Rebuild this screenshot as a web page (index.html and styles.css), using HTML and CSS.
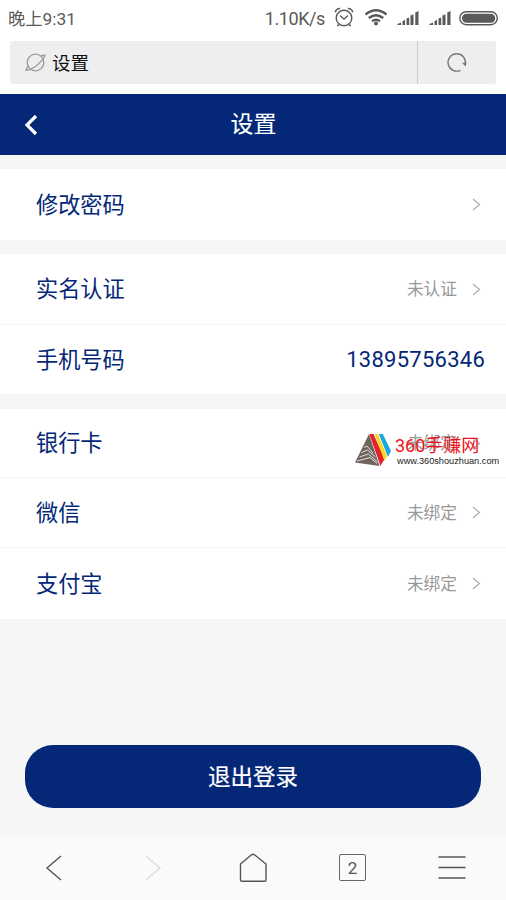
FILE: index.html
```html
<!DOCTYPE html>
<html lang="zh-CN">
<head>
<meta charset="utf-8">
<title>设置</title>
<link rel="stylesheet" href="styles.css">
</head>
<body>
<div class="status">
  <span class="time">晚上9:31</span>
  <span class="speed">1.10K/s</span>
  <svg class="status-icons" width="164" height="24" viewBox="334 6 164 24">
    <g fill="none" stroke="#5a5a5a" stroke-width="1.4" stroke-linecap="round">
      <circle cx="344" cy="18" r="7.8"/>
      <path d="M340.500 16l3.500 3 3.500-3M335.300 11.800a5 5 0 0 1 4.200-3.300M352.700 11.800a5 5 0 0 0-4.200-3.300M339 24.500l-1.300 1.300M349 24.500l1.300 1.300"/>
      <g stroke-width="2.400" stroke-linecap="butt"><path d="M365.500 14.500q10.500-8.500 21 0M368.800 18q7.200-5.600 14.400 0M372 21.200q4-2.800 8 0"/></g>
      <rect x="459.800" y="11.700" width="37.500" height="13" rx="6.500"/>
    </g>
    <g fill="#5a5a5a">
      <circle cx="376" cy="23.500" r="2"/>
      <path id="bars" d="M397.500 25v-1l3.500-1.500v2.500zM402.500 25v-4l2.500-1v5zM406.500 25v-6.500l2.700-1v7.500zM410.500 25v-9.500l3-1.300v10.800zM415.300 25v-12.500l3.200-1.500v14z"/>
      <use href="#bars" x="32"/>
      <rect x="462" y="13.700" width="33.200" height="9" rx="4.500"/>
    </g>
  </svg>
</div>
<div class="address">
  <div class="page-name">
    <svg width="22" height="20" viewBox="0 0 22 20" fill="none" stroke="#999" stroke-width="1.300"><circle cx="10.500" cy="9.500" r="8.300"/><path d="M3 13L1 17.200L5 16.700Q14 12.500 19.700 3.500L19.700 2L15.800 3"/></svg>
    <span>设置</span>
  </div>
  <div class="reload">
    <svg width="22" height="22" viewBox="0 0 22 22"><path d="M14.500 18.300A8.700 8.700 0 1 1 19.300 12" fill="none" stroke="#777" stroke-width="1.300"/><path d="M16 11l4.500-.5-.8 4z" fill="#777"/></svg>
  </div>
</div>
<header class="titlebar">
  <svg class="back" width="16" height="24" viewBox="0 0 16 24"><path d="M13 3L4 12l9 9" fill="none" stroke="#fff" stroke-width="3.200"/></svg>
  <h1>设置</h1>
</header>
<main>
  <section class="group password">
    <div class="row"><span>修改密码</span><svg class="chev" viewBox="0 0 9 13"><path d="M1 1l6.500 5.500L1 12"/></svg></div>
  </section>
  <section class="group identity">
    <div class="row"><span>实名认证</span><em>未认证</em><svg class="chev" viewBox="0 0 9 13"><path d="M1 1l6.500 5.500L1 12"/></svg></div>
    <div class="row"><span>手机号码</span><b class="phone">13895756346</b></div>
  </section>
  <section class="group accounts">
    <div class="row"><span>银行卡</span><em>未绑定</em><svg class="chev" viewBox="0 0 9 13"><path d="M1 1l6.500 5.500L1 12"/></svg>
      <div class="mark">
        <svg width="38" height="34" viewBox="354 433 38 34">
          <path d="M369 434L355 462.500l24.500 3.500z" fill="#70645f"/>
          <path d="M357 461l13-3.500 7 6M359.500 457l9-3 9 8M361.500 452.500l6-2.500 8 7M364 447.500l3-1.500 6 7" fill="none" stroke="#fff" stroke-width=".8"/>
          <path d="M369.300 434h4.200l11 25-4 7z" fill="#e3202b"/>
          <path d="M374.500 434h3.200l9.300 22-2.500 5z" fill="#fbd51e"/>
          <path d="M378.800 434h4l8.200 17-3 6z" fill="#18a8df"/>
        </svg>
        <div class="mark-text"><strong>360手赚网</strong><small>www.360shouzhuan.com</small></div>
      </div>
    </div>
    <div class="row"><span>微信</span><em>未绑定</em><svg class="chev" viewBox="0 0 9 13"><path d="M1 1l6.500 5.500L1 12"/></svg></div>
    <div class="row"><span>支付宝</span><em>未绑定</em><svg class="chev" viewBox="0 0 9 13"><path d="M1 1l6.500 5.500L1 12"/></svg></div>
  </section>
  <button class="logout">退出登录</button>
</main>
<nav class="toolbar">
  <svg viewBox="0 0 30 30"><path d="M22 3L8 15l14 12"/></svg>
  <svg class="off" viewBox="0 0 30 30"><path d="M8 3l14 12L8 27"/></svg>
  <svg viewBox="0 0 30 30"><path d="M2.500 11L13.500 1.800q1.500-1 3 0L28 11V27q0 1.300-1.300 1.300H3.800q-1.300 0-1.300-1.300z"/></svg>
  <span class="tabs"><i>2</i></span>
  <svg viewBox="0 0 30 30"><path d="M1.500 4h27M1.500 14.500h27M1.500 25h27"/></svg>
</nav>
</body>
</html>
```
FILE: styles.css
```css
* { box-sizing: border-box; }
body {
  margin: 0;
  width: 506px;
  height: 900px;
  display: flex;
  flex-direction: column;
  overflow: hidden;
  background: #fff;
  font-family: Roboto, "Noto Sans CJK SC", sans-serif;
}
svg { display: block; flex: none; }
.status {
  height: 41px;
  padding: 0 8px 5px;
  display: flex;
  align-items: center;
  color: #5a5a5a;
  font-size: 18px;
}
.time { font-size: 17.3px; padding-bottom: 2px; }
.speed { margin-left: auto; margin-right: 9px; letter-spacing: -.4px; }
.address {
  height: 43px;
  margin: 0 10px 10px;
  display: flex;
  background: #eeeef0;
  border-radius: 3px;
}
.page-name {
  flex: 1;
  display: flex;
  align-items: center;
  gap: 5px;
  padding-left: 15px;
  font-size: 18.5px;
  color: #111;
}
.page-name span { padding-bottom: 1px; }
.reload {
  width: 79px;
  border-left: 1px solid #ccc;
  display: flex;
  align-items: center;
  justify-content: center;
}
.titlebar {
  height: 61px;
  display: grid;
  grid-template-columns: 46px 1fr 46px;
  align-items: center;
  background: #042777;
  color: #fff;
}
.back { margin-left: 23px; }
h1 {
  margin: 0;
  padding-left: 1px;
  text-align: center;
  font-size: 23px;
  line-height: 34px;
  font-weight: 400;
  -webkit-text-stroke: .1px #fff;
}
main {
  flex: 1;
  display: flex;
  flex-direction: column;
  padding-top: 14px;
  background: #f6f6f6;
}
.group { background: #fff; }
.row {
  position: relative;
  height: 70px;
  padding: 0 25px 0 36px;
  display: flex;
  align-items: center;
  font-size: 22.2px;
  color: #042777;
}
.password { margin-bottom: 14px; }
.password .row { height: 71px; }
.identity { margin-bottom: 15px; }
.accounts .row:first-child { height: 68px; }
.accounts .row:last-child { height: 72px; }
.row + .row { border-top: 1px solid #f5f5f5; }
.row > span { flex: 1; padding-bottom: 4px; }
em { margin-right: 15px; padding-bottom: 2px; font-size: 16.7px; font-style: normal; color: #999; }
.chev { width: 9px; height: 13px; fill: none; stroke: #aaa; stroke-width: 1.1; }
.phone { margin-right: -4px; padding-bottom: 1px; font-weight: 400; font-size: 22px; letter-spacing: .25px; }
.mark {
  position: absolute;
  left: 354px;
  top: 24px;
  display: flex;
  align-items: flex-start;
}
.mark-text { display: flex; flex-direction: column; margin-left: 3px; white-space: nowrap; }
.mark-text strong { font-weight: 400; font-size: 18px; line-height: 26px; color: #f01018; }
.mark-text small { margin: -4px 0 0 2px; font: 9.2px/12px "Liberation Sans", sans-serif; color: #222; }
.logout {
  width: 456px;
  height: 63px;
  margin: 126px auto 0;
  padding: 0;
  border: 0;
  border-radius: 28px;
  background: #042777;
  color: #fff;
  font: 400 22.5px/65px Roboto, "Noto Sans CJK SC", sans-serif;
  -webkit-text-stroke: .2px #fff;
}
.toolbar {
  height: 65px;
  padding: 0 4px;
  display: grid;
  grid-template-columns: repeat(5, 1fr);
  place-items: center;
  background: #fafafa;
}
.toolbar svg { width: 30px; height: 30px; fill: none; stroke: #555; stroke-width: 1.4; }
.toolbar .off { stroke: #ddd; }
.tabs {
  width: 27px;
  height: 27px;
  display: grid;
  place-items: center;
  border: 1.5px solid #666;
  border-radius: 2px;
  font-size: 17px;
  color: #555;
}
.tabs i { font-style: normal; }
```
